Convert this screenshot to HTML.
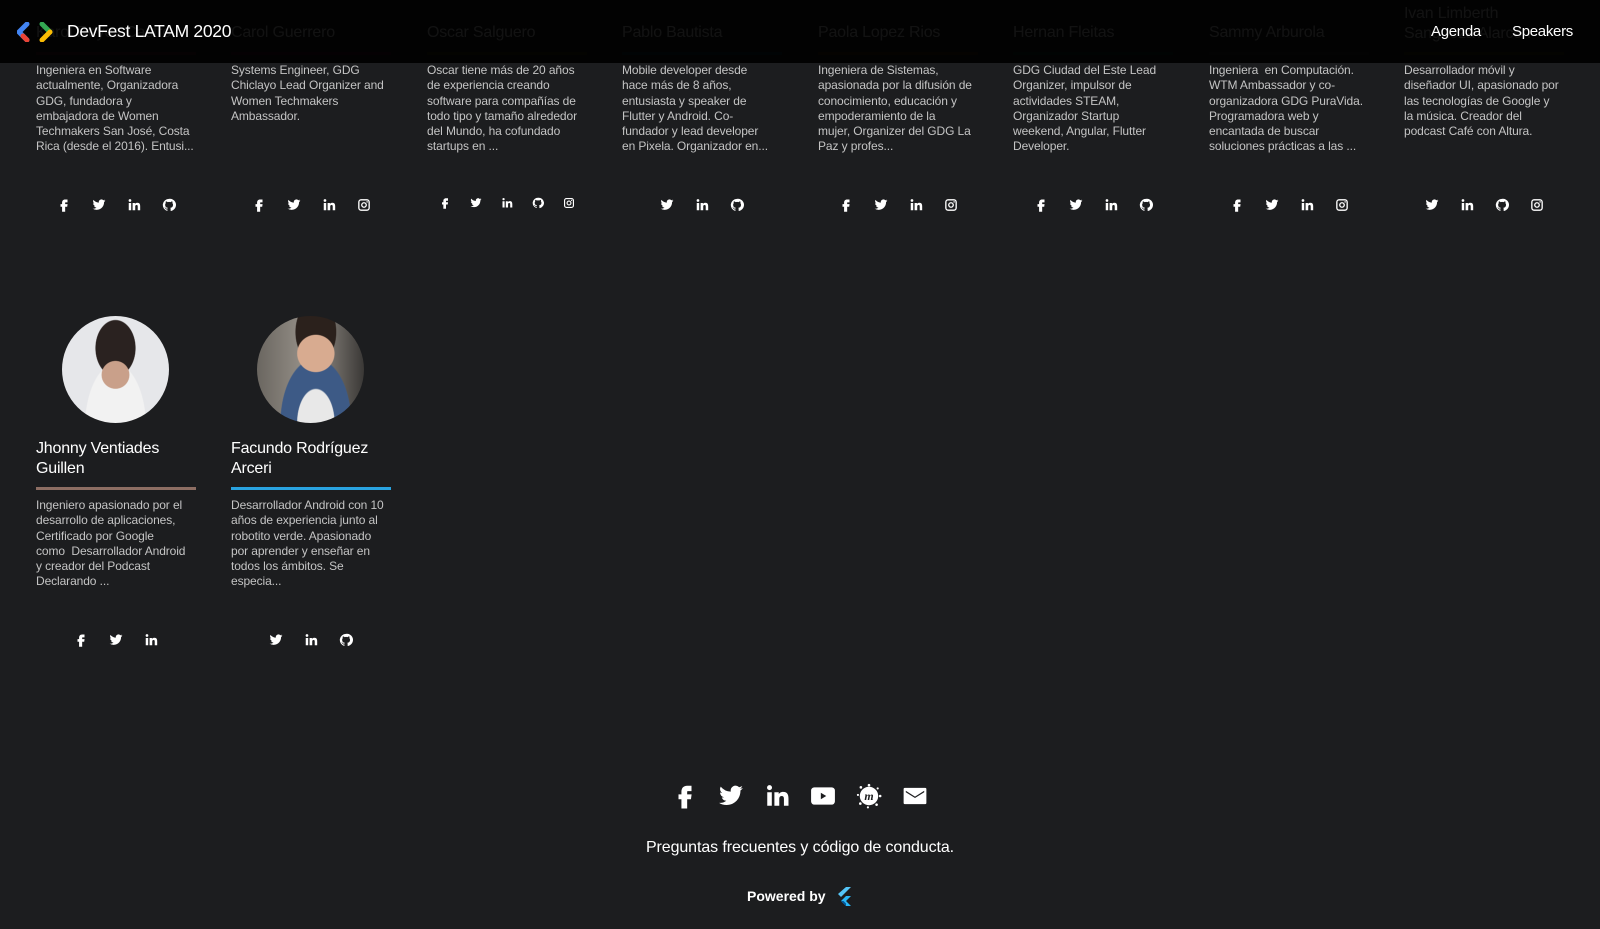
<!DOCTYPE html>
<html><head><meta charset="utf-8">
<style>
*{margin:0;padding:0;box-sizing:border-box}
body{width:1600px;height:929px;background:#1c1d1f;font-family:"Liberation Sans",sans-serif;color:#fff;position:relative;overflow:hidden}
.col{position:absolute;width:160px}
.name{position:absolute;left:0;width:165px;font-size:16px;line-height:19.5px;color:#fff;letter-spacing:-0.2px}
.line{position:absolute;left:0;width:160px;height:3px}
.desc{position:absolute;left:0;white-space:nowrap;font-size:12px;line-height:15.3px;color:#c4c4c4;letter-spacing:-0.1px}
.icons{position:absolute;left:0;width:160px;display:flex;justify-content:center;gap:21px}
.icons svg{width:14px;height:14px;fill:#fff}
.hdr{position:absolute;left:0;top:0;width:1600px;height:63px;background:rgba(0,0,0,0.93)}
.av{position:absolute;width:107px;height:107px;border-radius:50%}
.foot{position:absolute;top:783px;left:0;width:1600px;display:flex;justify-content:center;gap:20px}
.foot svg{width:26px;height:26px;fill:#fff}
</style></head><body>
<svg width="0" height="0" style="position:absolute">
<defs>
<symbol id="fb" viewBox="0 0 24 24"><path d="M14.5 7.5h3.5V2.5h-4C10.5 2.5 8.7 4.8 8.7 8v2.5H6V15h2.7v8.5h5.3V15h3.5l.6-4.5H14V8.3c0-.5.2-.8.5-.8z"/></symbol>
<symbol id="tw" viewBox="0 0 24 24"><path d="M23 4.6a9 9 0 0 1-2.6.7 4.5 4.5 0 0 0 2-2.5 9 9 0 0 1-2.9 1.1 4.5 4.5 0 0 0-7.7 4.1A12.8 12.8 0 0 1 2.5 3.3a4.5 4.5 0 0 0 1.4 6 4.5 4.5 0 0 1-2-.6v.1a4.5 4.5 0 0 0 3.6 4.4 4.5 4.5 0 0 1-2 .1 4.5 4.5 0 0 0 4.2 3.1A9 9 0 0 1 1 18.3a12.8 12.8 0 0 0 6.9 2c8.3 0 12.8-6.9 12.8-12.8v-.6A9 9 0 0 0 23 4.6z"/></symbol>
<symbol id="li" viewBox="0 0 24 24"><path d="M3 8.5h4.2V21H3zM5.1 2a2.3 2.3 0 1 1 0 4.6 2.3 2.3 0 0 1 0-4.6zM9.6 8.5h4v1.8c.6-1 2-2.1 4-2.1 4.2 0 5 2.7 5 6.3V21h-4.2v-5.8c0-1.4 0-3.2-2-3.2s-2.3 1.5-2.3 3.1V21H9.6z"/></symbol>
<symbol id="gh" viewBox="0 0 24 24"><path d="M12 1.5a10.5 10.5 0 0 0-3.3 20.5c.5.1.7-.2.7-.5v-1.8c-2.9.6-3.5-1.4-3.5-1.4-.5-1.2-1.2-1.5-1.2-1.5-1-.7.1-.7.1-.7 1 .1 1.6 1.1 1.6 1.1.9 1.6 2.5 1.1 3.1.9.1-.7.4-1.1.7-1.4-2.3-.3-4.8-1.2-4.8-5.2 0-1.1.4-2.1 1.1-2.8-.1-.3-.5-1.3.1-2.8 0 0 .9-.3 2.9 1.1a10 10 0 0 1 5.3 0c2-1.4 2.9-1.1 2.9-1.1.6 1.5.2 2.5.1 2.8.7.7 1.1 1.7 1.1 2.8 0 4-2.5 4.9-4.8 5.2.4.3.7 1 .7 2v3c0 .3.2.6.7.5A10.5 10.5 0 0 0 12 1.5z"/></symbol>
<symbol id="ig" viewBox="0 0 24 24"><path fill-rule="evenodd" d="M7 2h10a5 5 0 0 1 5 5v10a5 5 0 0 1-5 5H7a5 5 0 0 1-5-5V7a5 5 0 0 1 5-5zm0 2.3A2.7 2.7 0 0 0 4.3 7v10A2.7 2.7 0 0 0 7 19.7h10a2.7 2.7 0 0 0 2.7-2.7V7A2.7 2.7 0 0 0 17 4.3zM12 7a5 5 0 1 1 0 10 5 5 0 0 1 0-10zm0 2.3a2.7 2.7 0 1 0 0 5.4 2.7 2.7 0 0 0 0-5.4zM17.3 5.4a1.3 1.3 0 1 1 0 2.6 1.3 1.3 0 0 1 0-2.6z"/></symbol>
<symbol id="yt" viewBox="0 0 24 24"><path fill-rule="evenodd" d="M4 4h16a3 3 0 0 1 3 3v10a3 3 0 0 1-3 3H4a3 3 0 0 1-3-3V7a3 3 0 0 1 3-3zm6 5v6l5-3z"/></symbol>
<symbol id="mu" viewBox="0 0 24 24"><circle cx="12" cy="12" r="8.5"/><circle cx="12" cy="2" r="1.2"/><circle cx="20" cy="5" r="1"/><circle cx="22.3" cy="12" r="1.2"/><circle cx="19" cy="20" r="1.2"/><circle cx="11" cy="22.5" r="1"/><circle cx="4" cy="19" r="1.2"/><circle cx="1.8" cy="11" r="1"/><circle cx="4.5" cy="4" r="1.2"/><text x="12" y="15.5" font-family="Liberation Serif,serif" font-style="italic" font-weight="bold" font-size="11" text-anchor="middle" fill="#1c1d1f">m</text></symbol>
<symbol id="ml" viewBox="0 0 24 24"><path d="M2.5 4.5h19a1 1 0 0 1 1 1v13a1 1 0 0 1-1 1h-19a1 1 0 0 1-1-1v-13a1 1 0 0 1 1-1zM3.5 7.2v1.3l8.5 5.4 8.5-5.4V7.2L12 12.6z" fill-rule="evenodd"/></symbol>
</defs></svg>

<!-- Row 1 -->
<div class="col" style="left:36px;top:0">
<div class="name" style="top:23px">Karol Reyes Castro</div><div class="line" style="top:52px;background:#5a1c2a"></div>
<div class="desc" style="top:63px">Ingeniera en Software<br>actualmente, Organizadora<br>GDG, fundadora y<br>embajadora de Women<br>Techmakers San José, Costa<br>Rica (desde el 2016). Entusi...</div>
<div class="icons" style="top:198px"><svg><use href="#fb"/></svg><svg><use href="#tw"/></svg><svg><use href="#li"/></svg><svg><use href="#gh"/></svg></div></div>

<div class="col" style="left:231px;top:0">
<div class="name" style="top:23px">Carol Guerrero</div><div class="line" style="top:52px;background:#4a1a30"></div>
<div class="desc" style="top:63px">Systems Engineer, GDG<br>Chiclayo Lead Organizer and<br>Women Techmakers<br>Ambassador.</div>
<div class="icons" style="top:198px"><svg><use href="#fb"/></svg><svg><use href="#tw"/></svg><svg><use href="#li"/></svg><svg><use href="#ig"/></svg></div></div>

<div class="col" style="left:427px;top:0">
<div class="name" style="top:23px">Oscar Salguero</div><div class="line" style="top:52px;background:#3f3f1a"></div>
<div class="desc" style="top:63px">Oscar tiene más de 20 años<br>de experiencia creando<br>software para compañías de<br>todo tipo y tamaño alrededor<br>del Mundo, ha cofundado<br>startups en ...</div>
<div class="icons" style="top:197px;gap:19px"><svg style="width:12px;height:12px"><use href="#fb"/></svg><svg style="width:12px;height:12px"><use href="#tw"/></svg><svg style="width:12px;height:12px"><use href="#li"/></svg><svg style="width:12px;height:12px"><use href="#gh"/></svg><svg style="width:12px;height:12px"><use href="#ig"/></svg></div></div>

<div class="col" style="left:622px;top:0">
<div class="name" style="top:23px">Pablo Bautista</div><div class="line" style="top:52px;background:#163a50"></div>
<div class="desc" style="top:63px">Mobile developer desde<br>hace más de 8 años,<br>entusiasta y speaker de<br>Flutter y Android. Co-<br>fundador y lead developer<br>en Pixela. Organizador en...</div>
<div class="icons" style="top:198px"><svg><use href="#tw"/></svg><svg><use href="#li"/></svg><svg><use href="#gh"/></svg></div></div>

<div class="col" style="left:818px;top:0">
<div class="name" style="top:23px">Paola Lopez Rios</div><div class="line" style="top:52px;background:#4a3318"></div>
<div class="desc" style="top:63px">Ingeniera de Sistemas,<br>apasionada por la difusión de<br>conocimiento, educación y<br>empoderamiento de la<br>mujer, Organizer del GDG La<br>Paz y profes...</div>
<div class="icons" style="top:198px"><svg><use href="#fb"/></svg><svg><use href="#tw"/></svg><svg><use href="#li"/></svg><svg><use href="#ig"/></svg></div></div>

<div class="col" style="left:1013px;top:0">
<div class="name" style="top:23px">Hernan Fleitas</div><div class="line" style="top:52px;background:#1a3a30"></div>
<div class="desc" style="top:63px">GDG Ciudad del Este Lead<br>Organizer, impulsor de<br>actividades STEAM,<br>Organizador Startup<br>weekend, Angular, Flutter<br>Developer.</div>
<div class="icons" style="top:198px"><svg><use href="#fb"/></svg><svg><use href="#tw"/></svg><svg><use href="#li"/></svg><svg><use href="#gh"/></svg></div></div>

<div class="col" style="left:1209px;top:0">
<div class="name" style="top:23px">Sammy Arburola</div><div class="line" style="top:52px;background:#2a2a2c"></div>
<div class="desc" style="top:63px">Ingeniera &nbsp;en Computación.<br>WTM Ambassador y co-<br>organizadora GDG PuraVida.<br>Programadora web y<br>encantada de buscar<br>soluciones prácticas a las ...</div>
<div class="icons" style="top:198px"><svg><use href="#fb"/></svg><svg><use href="#tw"/></svg><svg><use href="#li"/></svg><svg><use href="#ig"/></svg></div></div>

<div class="col" style="left:1404px;top:0">
<div class="name" style="top:4px">Ivan Limberth<br>Sangueza Alarcon</div><div class="line" style="top:52px;background:#3a3a14"></div>
<div class="desc" style="top:63px">Desarrollador móvil y<br>diseñador UI, apasionado por<br>las tecnologías de Google y<br>la música. Creador del<br>podcast Café con Altura.</div>
<div class="icons" style="top:198px"><svg><use href="#tw"/></svg><svg><use href="#li"/></svg><svg><use href="#gh"/></svg><svg><use href="#ig"/></svg></div></div>

<!-- Header -->
<div class="hdr"></div>
<svg style="position:absolute;left:17px;top:22px" width="38" height="20" viewBox="0 0 38 20">
<path d="M10 2 L2 10 L10 18" stroke="#4285f4" stroke-width="5" stroke-linecap="round" stroke-linejoin="round" fill="none"/>
<path d="M6 14 L10 18" stroke="#ea4335" stroke-width="5" stroke-linecap="round"/>
<path d="M25 2 L33 10" stroke="#34a853" stroke-width="5" stroke-linecap="round"/>
<path d="M33 10 L25 18" stroke="#fbbc04" stroke-width="5" stroke-linecap="round"/>
</svg>
<div style="position:absolute;left:67px;top:21px;font-size:17.5px;letter-spacing:-0.3px">DevFest LATAM 2020</div>
<div style="position:absolute;left:1431px;top:23px;font-size:15px;letter-spacing:-0.3px">Agenda</div>
<div style="position:absolute;left:1512px;top:23px;font-size:15px;letter-spacing:-0.3px">Speakers</div>

<!-- Row 2 -->
<div class="av" style="left:62px;top:316px;background:radial-gradient(circle at 50% 55%,#c9a08a 0 17%,transparent 18%),radial-gradient(ellipse at 50% 30%,#2a2220 0 26%,transparent 27%),radial-gradient(ellipse at 50% 105%,#f2f2f2 0 40%,transparent 41%),#e6e7ea"></div>
<div class="av" style="left:257px;top:316px;background:radial-gradient(circle at 55% 35%,#d8ab90 0 20%,transparent 21%),radial-gradient(ellipse at 55% 15%,#2b211c 0 24%,transparent 25%),radial-gradient(ellipse at 55% 100%,#e8e8e8 0 22%,#3d5a86 23% 42%,transparent 43%),linear-gradient(90deg,#6a6660,#9a948c 50%,#3a3836)"></div>

<div class="col" style="left:36px;top:435px">
<div class="name" style="top:4px">Jhonny Ventiades<br>Guillen</div><div class="line" style="top:52px;background:#8d6e63"></div>
<div class="desc" style="top:63px">Ingeniero apasionado por el<br>desarrollo de aplicaciones,<br>Certificado por Google<br>como &nbsp;Desarrollador Android<br>y creador del Podcast<br>Declarando ...</div>
<div class="icons" style="top:198px"><svg><use href="#fb"/></svg><svg><use href="#tw"/></svg><svg><use href="#li"/></svg></div></div>

<div class="col" style="left:231px;top:435px">
<div class="name" style="top:4px">Facundo Rodríguez<br>Arceri</div><div class="line" style="top:52px;background:#29a3e0"></div>
<div class="desc" style="top:63px">Desarrollador Android con 10<br>años de experiencia junto al<br>robotito verde. Apasionado<br>por aprender y enseñar en<br>todos los ámbitos. Se<br>especia...</div>
<div class="icons" style="top:198px"><svg><use href="#tw"/></svg><svg><use href="#li"/></svg><svg><use href="#gh"/></svg></div></div>

<!-- Footer -->
<div class="foot"><svg><use href="#fb"/></svg><svg><use href="#tw"/></svg><svg><use href="#li"/></svg><svg><use href="#yt"/></svg><svg><use href="#mu"/></svg><svg><use href="#ml"/></svg></div>
<div style="position:absolute;top:839px;left:0;width:1600px;text-align:center;font-size:16px;letter-spacing:-0.1px">Preguntas frecuentes y código de conducta.</div>
<div style="position:absolute;top:888px;left:747px;font-size:14px;font-weight:bold">Powered by</div>
<svg style="position:absolute;left:836px;top:887px" width="16" height="20" viewBox="0 0 16 20">
<path d="M10 0h5L5 10l-3-3z" fill="#54c5f8"/><path d="M10 9h5l-5 5 5 5h-5l-5-5z" fill="#29b6f6"/><path d="M7.5 14l2.5 2.5L10 19l-5-5z" fill="#01579b"/>
</svg>
</body></html>
